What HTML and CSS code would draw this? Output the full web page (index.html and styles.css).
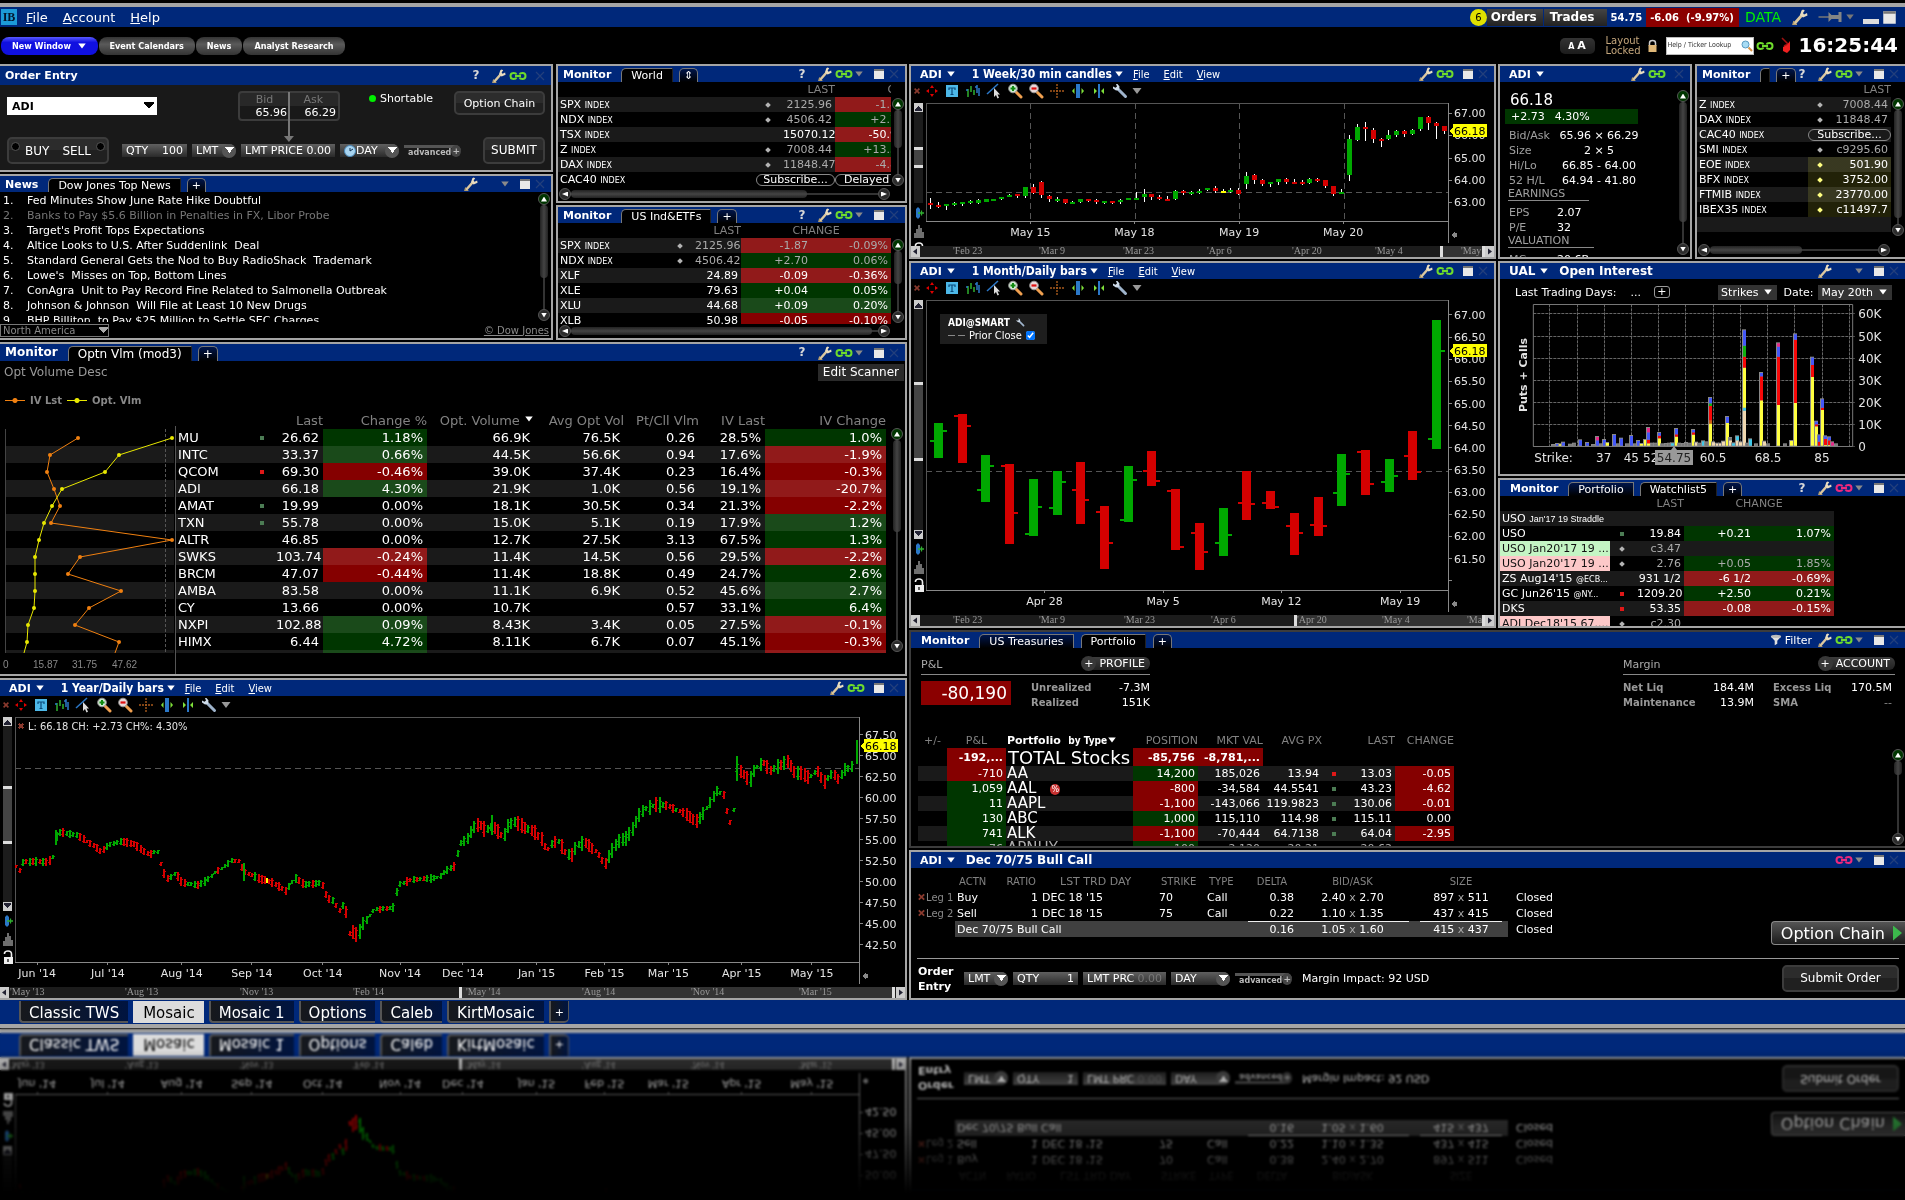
FILE: index.html
```
<!DOCTYPE html>
<html lang="en">

<head>
    <meta charset="UTF-8">
    <meta name="viewport" content="width=device-width, initial-scale=1.0">
    <title>Mosaic</title>
    <link rel="stylesheet" href="styles.css">
</head>

<body>
    <!-- Icon set -->
    <svg class="sprite" aria-hidden="true">
        <symbol id="i-wrench" viewBox="0 0 16 16">
            <path d="M3 14L10 6" stroke="#dcc8a0" stroke-width="2.8" stroke-linecap="round" />
            <path d="M9.500 1.500L8 6L11 8.500L15.500 6.500L15 4L12 5.500L11 4L12.800 1.500L11 .5Z" fill="#e8dcc0" />
            <path d="M2 12L1 15.500H5" stroke="#b8a070" stroke-width="1.500" fill="none" />
        </symbol>
        <symbol id="i-spanner" viewBox="0 0 16 16">
            <path d="M13.500 13.500L6 6" stroke="#9fb4cc" stroke-width="3" stroke-linecap="round" />
            <path d="M5.500 1L7.500 3.500L7 7L4 7.500L1 5.500L1 3.500L3.500 4.800L5 3.500L4 1Z" fill="#cfdcea" />
        </symbol>
        <symbol id="i-link" viewBox="0 0 18 10">
            <path d="M6 5H12" stroke="currentColor" stroke-width="2" />
            <path d="M7.500 3.500Q7 2 4.500 2Q1.500 2 1.500 5Q1.500 8 4.500 8Q7 8 7.500 6.500M10.500 3.500Q11 2 13.500 2Q16.500 2 16.500 5Q16.500 8 13.500 8Q11 8 10.500 6.500" fill="none" stroke="currentColor" stroke-width="2" />
        </symbol>
        <symbol id="i-win" viewBox="0 0 12 12">
            <rect x="1" y="1" width="10" height="10" fill="#e8e8e8" />
            <rect x="1" y="1" width="10" height="2" fill="#777" />
        </symbol>
        <symbol id="i-close" viewBox="0 0 12 12">
            <path d="M2 2L10 10M10 2L2 10" stroke="#233f7c" stroke-width="1.200" />
        </symbol>
        <symbol id="i-caret" viewBox="0 0 8 8">
            <path d="M1 2H7L4 6Z" fill="currentColor" />
        </symbol>
        <symbol id="i-filter" viewBox="0 0 14 14">
            <ellipse cx="7" cy="3" rx="6" ry="2" fill="#bbb" />
            <path d="M1 3L5.500 8V13L8.500 11.500V8L13 3Q7 6.500 1 3Z" fill="#e0e0e0" />
        </symbol>
        <symbol id="i-red-x" viewBox="0 0 10 10">
            <path d="M2 2L8 8M8 2L2 8" stroke="#8b3a2e" stroke-width="2" />
        </symbol>
        <symbol id="i-move" viewBox="0 0 16 16">
            <path d="M8 2L10 5H6ZM8 14L10 11H6ZM2 8L5 6V10ZM14 8L11 6V10Z" fill="#e00000" />
        </symbol>
        <symbol id="i-text" viewBox="0 0 16 16">
            <rect x="2" y="2" width="12" height="12" fill="#4db8e8" />
            <path d="M5 7V5H11V7M8 5V11.500M6.500 11.500H9.500" stroke="#0a4a7a" stroke-width="1.200" fill="none" />
        </symbol>
        <symbol id="i-bars" viewBox="0 0 16 16">
            <path d="M3 6V14M6 3V9M9 7V12" stroke="#2fb02f" stroke-width="1.500" />
            <path d="M1 7H3M10 4H12M12 2V10M14 5V13" stroke="#2b78c8" stroke-width="1.500" />
        </symbol>
        <symbol id="i-trend" viewBox="0 0 16 16">
            <path d="M1 11L12 1" stroke="#2b78c8" stroke-width="1.500" />
            <path d="M8 5V14L10 12L11.500 15.500L13 14.800L11.500 11.500H14Z" fill="#ddd" />
        </symbol>
        <symbol id="i-zoomin" viewBox="0 0 16 16">
            <path d="M9 9L14 14" stroke="#f0a050" stroke-width="3" stroke-linecap="round" />
            <circle cx="6" cy="5.500" r="4.300" fill="#d0e8d0" stroke="#999" />
            <path d="M3.500 5.500H8.500M6 3V8" stroke="#108a10" stroke-width="2" />
        </symbol>
        <symbol id="i-zoomout" viewBox="0 0 16 16">
            <path d="M9 9L14 14" stroke="#f0a050" stroke-width="3" stroke-linecap="round" />
            <circle cx="6" cy="5.500" r="4.300" fill="#e8d8d8" stroke="#999" />
            <path d="M3.500 5.500H8.500" stroke="#e01010" stroke-width="2.200" />
        </symbol>
        <symbol id="i-cross" viewBox="0 0 16 16">
            <path d="M8 1V15M1 8H15" stroke="#a85a1c" stroke-width="1.400" stroke-dasharray="2 1" />
        </symbol>
        <symbol id="i-expand" viewBox="0 0 16 16">
            <rect x="6" y="1" width="4" height="14" fill="#2b78c8" />
            <path d="M4.500 5V11L2 8ZM11.500 5V11L14 8Z" fill="#7fe03a" />
        </symbol>
        <symbol id="i-contract" viewBox="0 0 16 16">
            <rect x="7" y="1" width="2" height="14" fill="#2b78c8" />
            <path d="M3 5V11L6 8ZM13 5V11L10 8Z" fill="#7fe03a" />
        </symbol>
        <symbol id="i-fit" viewBox="0 0 10 14">
            <path d="M4 1L6 3V11L4 13L2 11V3Z" fill="#2b78c8" />
            <path d="M4 7H10M7.500 4.500V9.500" stroke="#2fb02f" stroke-width="1.300" />
        </symbol>
        <symbol id="i-volume" viewBox="0 0 10 14">
            <path d="M1 14V9M3 14V5M5 14V1M7 14V4M9 14V8" stroke="#ddd" />
        </symbol>
        <symbol id="i-unlock" viewBox="0 0 10 14">
            <path d="M1.500 4V3Q2 1 5 1Q8.500 1 8.500 4V8" fill="none" stroke="#eee" stroke-width="1.600" />
            <rect x="1" y="7" width="9" height="7" fill="#eee" />
            <path d="M5 9V12" stroke="#222" stroke-width="1.400" />
        </symbol>
        <symbol id="i-lock" viewBox="0 0 10 14">
            <path d="M2 7V4Q2 1.500 5 1.500Q8 1.500 8 4V7" fill="none" stroke="#ccc" stroke-width="1.500" />
            <rect x="1" y="6" width="8" height="7" fill="#e0b878" />
        </symbol>
        <symbol id="i-pin" viewBox="0 0 24 14">
            <path d="M0 7H11" stroke="#777" stroke-width="1.500" />
            <path d="M10 2V12L13 9H20V12H23V2H20V5H13Z" fill="#858585" />
        </symbol>
        <symbol id="i-search" viewBox="0 0 12 12">
            <path d="M7.500 7.500L11 11" stroke="#d89040" stroke-width="2" />
            <circle cx="4.500" cy="4.500" r="3.500" fill="#a8dcf4" stroke="#5a9ac0" />
        </symbol>
        <symbol id="i-phone" viewBox="0 0 10 18">
            <path d="M1 1L7 7L3 9" fill="none" stroke="#a01010" stroke-width="1.500" />
            <path d="M2 10L6 8L9 4V13L6 16L2 14Z" fill="#f02020" />
        </symbol>
        <symbol id="i-clock" viewBox="0 0 12 12">
            <circle cx="6" cy="6" r="5.500" fill="#a8d4f0" stroke="#4a88b8" />
            <path d="M6 3V6L9 4" stroke="#103050" fill="none" />
        </symbol>
    </svg>

    <div class="desk">
        <!-- Title bar -->
        <header class="titlebar">
            <span class="logo">IB</span>
            <nav class="menu">
                <a href="#"><u>F</u>ile</a>
                <a href="#"><u>A</u>ccount</a>
                <a href="#"><u>H</u>elp</a>
            </nav>
            <div class="title-right">
                <span class="badge">6</span>
                <button class="blotter">Orders</button>
                <button class="blotter trades">Trades</button>
                <b class="acct">54.75</b>
                <b class="acct acct-loss">-6.06&nbsp; (-9.97%)</b>
                <span class="data">DATA</span>
                <svg class="ic wr"><use href="#i-wrench" /></svg>
                <svg class="ic pin"><use href="#i-pin" /></svg>
                <svg class="ic caret"><use href="#i-caret" /></svg>
                <button class="minimize" aria-label="Minimize"></button>
                <svg class="ic"><use href="#i-win" /></svg>
            </div>
        </header>

        <!-- Toolbar -->
        <div class="toolbar">
            <button class="pill pill-new">New Window &nbsp;<svg class="ic caret"><use href="#i-caret" /></svg></button>
            <button class="pill">Event Calendars</button>
            <button class="pill">News</button>
            <button class="pill">Analyst Research</button>
            <div class="toolbar-right">
                <button class="font-size">A <span>A</span></button>
                <span class="layout">Layout<br>Locked</span>
                <svg class="ic lock"><use href="#i-lock" /></svg>
                <label class="search"><input type="text" placeholder="Help / Ticker Lookup" aria-label="Help or ticker lookup"><svg class="ic"><use href="#i-search" /></svg></label>
                <svg class="ic link"><use href="#i-link" /></svg>
                <svg class="ic phone"><use href="#i-phone" /></svg>
                <time class="clock">16:25:44</time>
            </div>
        </div>

        <main class="mosaic">
            <div class="col">
                <div class="left-top">
                    <div class="col">
                        <!-- Order entry -->
                        <section class="panel edge-left order">
                            <div class="head head-tall"><h2>Order Entry</h2><div class="icons" data-icons="help wrench link close"></div></div>
                            <form class="order-body">
                                <div class="order-row">
                                    <select class="ticker" aria-label="Ticker"><option>ADI</option></select>
                                    <div class="bidask">
                                        <span>Bid</span><span>Ask</span>
                                        <b>65.96</b><b>66.29</b>
                                    </div>
                                    <span class="shortable">Shortable</span>
                                    <button type="button" class="btn btn-chain">Option Chain</button>
                                </div>
                                <div class="order-row">
                                    <div class="btn side"><label><input type="radio" name="side">BUY</label><label>SELL<input type="radio" name="side"></label></div>
                                    <label class="field qty">QTY<input type="text" value="100"></label>
                                    <label class="field drop"><select aria-label="Order type"><option>LMT</option></select></label>
                                    <label class="field price">LMT PRICE<input type="text" value="0.00"></label>
                                    <label class="field drop day"><svg class="ic"><use href="#i-clock" /></svg><select aria-label="Time in force"><option>DAY</option></select></label>
                                    <button type="button" class="advanced">advanced<span>+</span></button>
                                    <button type="button" class="btn btn-submit">SUBMIT</button>
                                </div>
                            </form>
                        </section>

                        <!-- News -->
                        <section class="panel edge-left news">
                            <div class="head"><h2>News</h2><a href="#" class="tab on">Dow Jones Top News</a><a href="#" class="tab plus">+</a><div class="icons" data-icons="wrench gap caret win close"></div></div>
                            <div class="body">
                                <ol class="clip">
                                    <li><a href="#">Fed Minutes Show June Rate Hike Doubtful</a></li>
                                    <li class="read"><a href="#">Banks to Pay $5.6 Billion in Penalties in FX, Libor Probe</a></li>
                                    <li><a href="#">Target's Profit Tops Expectations</a></li>
                                    <li><a href="#">Altice Looks to U.S. After Suddenlink&nbsp; Deal</a></li>
                                    <li><a href="#">Standard General Gets the Nod to Buy RadioShack&nbsp; Trademark</a></li>
                                    <li><a href="#">Lowe's&nbsp; Misses on Top, Bottom Lines</a></li>
                                    <li><a href="#">ConAgra&nbsp; Unit to Pay Record Fine Related to Salmonella Outbreak</a></li>
                                    <li><a href="#">Johnson &amp; Johnson&nbsp; Will File at Least 10 New Drugs</a></li>
                                    <li><a href="#">BHP Billiton&nbsp; to Pay $25 Million to Settle SEC Charges</a></li>
                                </ol>
                                <div class="vscroll" data-thumb="70"></div>
                            </div>
                            <div class="news-foot"><select aria-label="Region"><option>North America</option></select><a href="#">© Dow Jones</a></div>
                        </section>
                    </div>

                    <div class="col">
                        <!-- World monitor -->
                        <section class="panel world">
                            <div class="head"><h2>Monitor</h2><a href="#" class="tab on">World</a><a href="#" class="tab plus">⇕</a><div class="icons" data-icons="help wrench link caret win close"></div></div>
                            <div class="body">
                                <div class="clip">
                                    <table class="quotes shade-odd">
                                        <colgroup><col><col class="w24"><col class="w55"><col class="w72"><col class="w80"></colgroup>
                                        <thead><tr><th></th><th></th><th>LAST</th><th colspan="2" class="mid">CHANGE</th></tr></thead>
                                        <tbody>
                                            <tr class="dim"><td>SPX <small>INDEX</small></td><td class="mk"><i class="dia"></i></td><td>2125.96</td><td class="dn">-1.87</td><td class="dn">-0.09%</td></tr>
                                            <tr class="dim"><td>NDX <small>INDEX</small></td><td class="mk"><i class="dia"></i></td><td>4506.42</td><td class="up">+2.70</td><td class="up">0.06%</td></tr>
                                            <tr><td>TSX <small>INDEX</small></td><td></td><td>15070.12</td><td class="dn">-50.94</td><td class="dn">-0.34%</td></tr>
                                            <tr class="dim"><td>Z <small>INDEX</small></td><td class="mk"><i class="dia"></i></td><td>7008.44</td><td class="up">+13.34</td><td class="up">0.19%</td></tr>
                                            <tr class="dim"><td>DAX <small>INDEX</small></td><td class="mk"><i class="dia"></i></td><td>11848.47</td><td class="dn">-4.89</td><td class="dn">-0.04%</td></tr>
                                            <tr><td>CAC40 <small>INDEX</small></td><td colspan="2" class="cap"><button class="capsule">Subscribe...</button></td><td colspan="2" class="cap"><button class="capsule delayed">Delayed</button></td></tr>
                                        </tbody>
                                    </table>
                                </div>
                                <div class="vscroll below-head" data-thumb="60"></div>
                            </div>
                            <div class="hscroll" data-thumb="77"></div>
                        </section>

                        <!-- US indices and ETFs -->
                        <section class="panel us">
                            <div class="head"><h2>Monitor</h2><a href="#" class="tab on">US Ind&amp;ETFs</a><a href="#" class="tab plus">+</a><div class="icons" data-icons="help wrench link caret win close"></div></div>
                            <div class="body">
                                <div class="clip">
                                    <table class="quotes shade-odd">
                                        <colgroup><col><col class="w24"><col class="w49"><col class="w70"><col class="w80"></colgroup>
                                        <thead><tr><th></th><th></th><th>LAST</th><th colspan="2" class="mid">CHANGE</th></tr></thead>
                                        <tbody>
                                            <tr class="dim"><td>SPX <small>INDEX</small></td><td class="mk"><i class="dia"></i></td><td>2125.96</td><td class="dn">-1.87</td><td class="dn">-0.09%</td></tr>
                                            <tr class="dim"><td>NDX <small>INDEX</small></td><td class="mk"><i class="dia"></i></td><td>4506.42</td><td class="up">+2.70</td><td class="up">0.06%</td></tr>
                                            <tr><td>XLF</td><td></td><td>24.89</td><td class="dn">-0.09</td><td class="dn">-0.36%</td></tr>
                                            <tr><td>XLE</td><td></td><td>79.63</td><td class="up">+0.04</td><td class="up">0.05%</td></tr>
                                            <tr><td>XLU</td><td></td><td>44.68</td><td class="up">+0.09</td><td class="up">0.20%</td></tr>
                                            <tr><td>XLB</td><td></td><td>50.98</td><td class="dn">-0.05</td><td class="dn">-0.10%</td></tr>
                                        </tbody>
                                    </table>
                                </div>
                                <div class="vscroll below-head" data-thumb="55"></div>
                            </div>
                            <div class="hscroll" data-thumb="98"></div>
                        </section>
                    </div>
                </div>

                <!-- Option volume scanner -->
                <section class="panel edge-left scanner">
                    <div class="head"><h2>Monitor</h2><a href="#" class="tab on">Optn Vlm (mod3)</a><a href="#" class="tab plus">+</a><div class="icons" data-icons="help wrench link caret win close"></div></div>
                    <div class="scan-top"><span>Opt Volume Desc</span><button>Edit Scanner</button></div>
                    <div class="legend"><i class="key iv"></i>IV Lst<i class="key vlm"></i>Opt. Vlm</div>
                    <div class="body">
                        <svg class="scan-plot" viewBox="0 0 176 262">
                            <path d="M6 34h168v17h-168zM6 68h168v17h-168zM6 102h168v17h-168zM6 136h168v17h-168zM6 170h168v17h-168zM6 204h168v17h-168zM6 238h168v3h-168z" fill="#1a1a1a" />
                            <path d="M5.500 17V241" stroke="#444" />
                            <path d="M165.500 17V241" stroke="#555" stroke-dasharray="3 2" />
                            <path d="M175.500 14V262" stroke="#555" />
                            <g class="iv" id="scan-iv"></g>
                            <g class="vlm" id="scan-vlm"></g>
                            <text x="3" y="256">0</text>
                            <text x="33" y="256">15.87</text>
                            <text x="72" y="256">31.75</text>
                            <text x="112" y="256">47.62</text>
                        </svg>
                        <div class="clip">
                            <table class="quotes big shade-even">
                                <colgroup><col><col class="w24"><col class="w50"><col class="w104"><col class="w107"><col class="w90"><col class="w75"><col class="w66"><col class="w121"></colgroup>
                                <thead><tr><th></th><th></th><th>Last</th><th>Change %</th><th>Opt. Volume <svg class="ic caret"><use href="#i-caret" /></svg></th><th>Avg Opt Vol</th><th>Pt/Cll Vlm</th><th>IV Last</th><th>IV Change</th></tr></thead>
                                <tbody>
                                    <tr><td>MU</td><td class="mk"><i class="sq"></i></td><td>26.62</td><td class="up">1.18%</td><td>66.9K</td><td>76.5K</td><td>0.26</td><td>28.5%</td><td class="up">1.0%</td></tr>
                                    <tr><td>INTC</td><td></td><td>33.37</td><td class="up">0.66%</td><td>44.5K</td><td>56.6K</td><td>0.94</td><td>17.6%</td><td class="dn">-1.9%</td></tr>
                                    <tr><td>QCOM</td><td class="mk"><i class="sq red"></i></td><td>69.30</td><td class="dn">-0.46%</td><td>39.0K</td><td>37.4K</td><td>0.23</td><td>16.4%</td><td class="dn">-0.3%</td></tr>
                                    <tr><td>ADI</td><td></td><td>66.18</td><td class="up">4.30%</td><td>21.9K</td><td>1.0K</td><td>0.56</td><td>19.1%</td><td class="dn">-20.7%</td></tr>
                                    <tr><td>AMAT</td><td class="mk"><i class="sq"></i></td><td>19.99</td><td>0.00%</td><td>18.1K</td><td>30.5K</td><td>0.34</td><td>21.3%</td><td class="dn">-2.2%</td></tr>
                                    <tr><td>TXN</td><td class="mk"><i class="sq"></i></td><td>55.78</td><td>0.00%</td><td>15.0K</td><td>5.1K</td><td>0.19</td><td>17.9%</td><td class="up">1.2%</td></tr>
                                    <tr><td>ALTR</td><td></td><td>46.85</td><td>0.00%</td><td>12.7K</td><td>27.5K</td><td>3.13</td><td>67.5%</td><td class="up">1.3%</td></tr>
                                    <tr><td>SWKS</td><td></td><td>103.74</td><td class="dn">-0.24%</td><td>11.4K</td><td>14.5K</td><td>0.56</td><td>29.5%</td><td class="dn">-2.2%</td></tr>
                                    <tr><td>BRCM</td><td></td><td>47.07</td><td class="dn">-0.44%</td><td>11.4K</td><td>18.8K</td><td>0.49</td><td>24.7%</td><td class="up">2.6%</td></tr>
                                    <tr><td>AMBA</td><td></td><td>83.58</td><td>0.00%</td><td>11.1K</td><td>6.9K</td><td>0.52</td><td>45.6%</td><td class="up">2.7%</td></tr>
                                    <tr><td>CY</td><td></td><td>13.66</td><td>0.00%</td><td>10.7K</td><td></td><td>0.57</td><td>33.1%</td><td class="up">6.4%</td></tr>
                                    <tr><td>NXPI</td><td></td><td>102.88</td><td class="up">0.09%</td><td>8.43K</td><td>3.4K</td><td>0.05</td><td>27.5%</td><td class="dn">-0.1%</td></tr>
                                    <tr><td>HIMX</td><td></td><td>6.44</td><td class="up">4.72%</td><td>8.11K</td><td>6.7K</td><td>0.07</td><td>45.1%</td><td class="dn">-0.3%</td></tr>
                                    <tr><td></td><td></td><td></td><td class="up"></td><td></td><td></td><td></td><td></td><td class="dn"></td></tr>
                                </tbody>
                            </table>
                        </div>
                        <div class="vscroll below-head" data-thumb="46"></div>
                    </div>
                </section>

                <!-- 1 year chart -->
                <section class="panel edge-left chart year">
                    <div class="head chart-head"><button class="sym">ADI<svg class="ic caret"><use href="#i-caret" /></svg></button><button class="span">1 Year/Daily bars<svg class="ic caret"><use href="#i-caret" /></svg></button><a href="#"><u>F</u>ile</a><a href="#"><u>E</u>dit</a><a href="#"><u>V</u>iew</a><div class="icons" data-icons="wrench link win close"></div></div>
                    <div class="chart-tools"></div>
                    <div class="chart-body"><div class="rail"></div><svg class="plot" id="chart-year"></svg></div>
                    <svg class="strip" id="strip-year"></svg>
                </section>
            </div>

            <div class="col">
                <div class="right-top">
                    <div class="col">
                        <!-- 1 week chart -->
                        <section class="panel chart week">
                            <div class="head chart-head"><button class="sym">ADI<svg class="ic caret"><use href="#i-caret" /></svg></button><button class="span">1 Week/30 min candles<svg class="ic caret"><use href="#i-caret" /></svg></button><a href="#"><u>F</u>ile</a><a href="#"><u>E</u>dit</a><a href="#"><u>V</u>iew</a><div class="icons" data-icons="wrench link win close"></div></div>
                            <div class="chart-tools"></div>
                            <div class="chart-body"><div class="rail"></div><svg class="plot" id="chart-week"></svg></div>
                            <svg class="strip" id="strip-week"></svg>
                        </section>

                        <!-- 1 month chart -->
                        <section class="panel chart month">
                            <div class="head chart-head"><button class="sym">ADI<svg class="ic caret"><use href="#i-caret" /></svg></button><button class="span">1 Month/Daily bars<svg class="ic caret"><use href="#i-caret" /></svg></button><a href="#"><u>F</u>ile</a><a href="#"><u>E</u>dit</a><a href="#"><u>V</u>iew</a><div class="icons" data-icons="wrench link win close"></div></div>
                            <div class="chart-tools"></div>
                            <div class="chart-body">
                                <div class="rail"></div><svg class="plot" id="chart-month"></svg>
                                <div class="study"><b>ADI@SMART <svg class="ic"><use href="#i-spanner" /></svg></b><label><i></i>Prior Close<input type="checkbox" checked></label></div>
                            </div>
                            <svg class="strip" id="strip-month"></svg>
                        </section>
                    </div>

                    <div class="col">
                        <div class="quote-row">
                            <!-- Quote details -->
                            <section class="panel quote">
                                <div class="head"><button class="sym">ADI<svg class="ic caret"><use href="#i-caret" /></svg></button><div class="icons" data-icons="wrench link close"></div></div>
                                <div class="body">
                                    <div class="clip details">
                                        <p class="price-now">66.18</p>
                                        <p class="change-now"><span>+2.73</span><span>4.30%</span></p>
                                        <dl>
                                            <dt>Bid/Ask</dt><dd>65.96 × 66.29</dd>
                                            <dt>Size</dt><dd>2 × 5</dd>
                                            <dt>Hi/Lo</dt><dd>66.85 - 64.00</dd>
                                            <dt>52 H/L</dt><dd>64.94 - 41.80</dd>
                                        </dl>
                                        <h3>EARNINGS</h3>
                                        <dl class="plain"><dt>EPS</dt><dd>2.07</dd><dt>P/E</dt><dd>32</dd></dl>
                                        <h3>VALUATION</h3>
                                        <dl class="plain"><dt>MC</dt><dd>20.6B</dd></dl>
                                    </div>
                                    <div class="vscroll" data-thumb="85"></div>
                                </div>
                            </section>

                            <!-- Index monitor -->
                            <section class="panel edge-right indexes">
                                <div class="head"><h2>Monitor</h2><a href="#" class="tab on sliver" aria-label="Indexes"></a><a href="#" class="tab plus">+</a><div class="icons" data-icons="help wrench link caret win close"></div></div>
                                <div class="body">
                                    <div class="clip">
                                        <table class="quotes shade-odd">
                                            <colgroup><col><col class="w24"><col class="w59"></colgroup>
                                            <thead><tr><th></th><th></th><th>LAST</th></tr></thead>
                                            <tbody>
                                                <tr class="dim"><td>Z <small>INDEX</small></td><td class="mk"><i class="dia"></i></td><td>7008.44</td></tr>
                                                <tr class="dim"><td>DAX <small>INDEX</small></td><td class="mk"><i class="dia"></i></td><td>11848.47</td></tr>
                                                <tr><td>CAC40 <small>INDEX</small></td><td colspan="2" class="cap"><button class="capsule">Subscribe...</button></td></tr>
                                                <tr class="dim"><td>SMI <small>INDEX</small></td><td class="mk"><i class="dia"></i></td><td>c9295.60</td></tr>
                                                <tr><td>EOE <small>INDEX</small></td><td class="mk late"><i class="dia"></i></td><td class="late">501.90</td></tr>
                                                <tr><td>BFX <small>INDEX</small></td><td class="mk late"><i class="dia"></i></td><td class="late">3752.00</td></tr>
                                                <tr><td>FTMIB <small>INDEX</small></td><td class="mk late"><i class="dia"></i></td><td class="late">23770.00</td></tr>
                                                <tr><td>IBEX35 <small>INDEX</small></td><td class="mk late"><i class="dia"></i></td><td class="late">c11497.7</td></tr>
                                                <tr><td></td><td></td><td></td></tr>
                                            </tbody>
                                        </table>
                                    </div>
                                    <div class="vscroll below-head" data-thumb="95"></div>
                                </div>
                                <div class="hscroll" data-thumb="55"></div>
                            </section>
                        </div>

                        <!-- Open interest -->
                        <section class="panel edge-right interest">
                            <div class="head"><button class="sym">UAL<svg class="ic caret"><use href="#i-caret" /></svg></button><h2>Open Interest</h2><div class="icons" data-icons="wrench gap caret win close"></div></div>
                            <div class="oi-tools">
                                <span>Last Trading Days:</span><span class="dots">...</span><button class="add">+</button>
                                <button class="menu-btn strikes">Strikes<svg class="ic caret"><use href="#i-caret" /></svg></button><span class="date">Date:</span><button class="menu-btn">May 20th<svg class="ic caret"><use href="#i-caret" /></svg></button>
                            </div>
                            <svg id="chart-oi"></svg>
                        </section>

                        <!-- Watchlist -->
                        <section class="panel edge-right watch">
                            <div class="head"><h2>Monitor</h2><a href="#" class="tab">Portfolio</a><a href="#" class="tab on">Watchlist5</a><a href="#" class="tab plus">+</a><div class="icons pink" data-icons="help wrench link caret win close"></div></div>
                            <div class="body">
                                <div class="clip">
                                    <table class="quotes shade-odd">
                                        <colgroup><col class="w110"><col class="w24"><col class="w50"><col class="w70"><col class="w80"></colgroup>
                                        <thead><tr><th></th><th></th><th>LAST</th><th colspan="2" class="mid">CHANGE</th></tr></thead>
                                        <tbody>
                                            <tr><td>USO <small class="long">Jan'17 19 Straddle</small></td><td></td><td></td><td></td><td></td></tr>
                                            <tr><td>USO</td><td class="mk"><i class="sq"></i></td><td>19.84</td><td class="up">+0.21</td><td class="up">1.07%</td></tr>
                                            <tr class="dim"><td class="call">USO Jan20'17 19 ...</td><td class="mk"><i class="dia"></i></td><td>c3.47</td><td></td><td></td></tr>
                                            <tr class="dim"><td class="put">USO Jan20'17 19 ...</td><td class="mk"><i class="dia"></i></td><td>2.76</td><td class="up">+0.05</td><td class="up">1.85%</td></tr>
                                            <tr><td>ZS Aug14'15 <small>@ECB...</small></td><td></td><td>931 1/2</td><td class="dn">-6 1/2</td><td class="dn">-0.69%</td></tr>
                                            <tr><td>GC Jun26'15 <small>@NY...</small></td><td class="mk"><i class="sq red"></i></td><td>1209.20</td><td class="up">+2.50</td><td class="up">0.21%</td></tr>
                                            <tr><td>DKS</td><td class="mk"><i class="sq red"></i></td><td>53.35</td><td class="dn">-0.08</td><td class="dn">-0.15%</td></tr>
                                            <tr class="dim"><td class="put">ADI Dec18'15 67....</td><td class="mk"><i class="dia"></i></td><td>c2.30</td><td></td><td></td></tr>
                                        </tbody>
                                    </table>
                                </div>
                            </div>
                        </section>
                    </div>
                </div>

                <!-- Portfolio -->
                <section class="panel edge-right portfolio">
                    <div class="head"><h2>Monitor</h2><a href="#" class="tab">US Treasuries</a><a href="#" class="tab on">Portfolio</a><a href="#" class="tab plus">+</a><div class="icons" data-icons="filter wrench link caret win close"></div></div>
                    <div class="summary">
                        <div class="pnl">
                            <div class="sum-head"><span>P&amp;L</span><button class="knobbed">PROFILE</button></div>
                            <div class="sum-body">
                                <span class="pnl-now">-80,190</span>
                                <dl><dt>Unrealized</dt><dd>-7.3M</dd><dt>Realized</dt><dd>151K</dd></dl>
                            </div>
                        </div>
                        <div class="margin">
                            <div class="sum-head"><span>Margin</span><button class="knobbed">ACCOUNT</button></div>
                            <div class="sum-body">
                                <dl><dt>Net Liq</dt><dd>184.4M</dd><dt>Maintenance</dt><dd>13.9M</dd></dl>
                                <dl><dt>Excess Liq</dt><dd>170.5M</dd><dt>SMA</dt><dd class="none">--</dd></dl>
                            </div>
                        </div>
                    </div>
                    <div class="body">
                        <div class="clip">
                            <table class="quotes positions">
                                <colgroup><col class="w29"><col class="w59"><col class="w127"><col class="w65"><col class="w65"><col class="w59"><col class="w24"><col class="w49"><col class="w59"></colgroup>
                                <thead><tr><th class="mid">+/-</th><th class="mid">P&amp;L</th><th class="by-type"><b>Portfolio</b> <button>by Type<svg class="ic caret"><use href="#i-caret" /></svg></button></th><th>POSITION</th><th>MKT VAL</th><th>AVG PX</th><th></th><th>LAST</th><th>CHANGE</th></tr></thead>
                                <tbody>
                                    <tr class="total"><td></td><td class="dn">-192,...</td><td>TOTAL Stocks</td><td class="dn">-85,756</td><td class="dn">-8,781,...</td><td></td><td></td><td></td><td></td></tr>
                                    <tr><td></td><td class="dn">-710</td><td>AA</td><td class="up">14,200</td><td>185,026</td><td>13.94</td><td class="mk"><i class="sq red"></i></td><td>13.03</td><td class="dn">-0.05</td></tr>
                                    <tr><td></td><td class="up">1,059</td><td>AAL<i class="alert">%</i></td><td class="dn">-800</td><td>-34,584</td><td>44.5541</td><td class="mk"><i class="sq"></i></td><td>43.23</td><td class="dn">-4.62</td></tr>
                                    <tr><td></td><td class="up">11</td><td>AAPL</td><td class="dn">-1,100</td><td>-143,066</td><td>119.9823</td><td class="mk"><i class="sq"></i></td><td>130.06</td><td class="dn">-0.01</td></tr>
                                    <tr><td></td><td class="up">130</td><td>ABC</td><td class="up">1,000</td><td>115,110</td><td>114.98</td><td class="mk"><i class="sq"></i></td><td>115.11</td><td>0.00</td></tr>
                                    <tr><td></td><td class="up">741</td><td>ALK</td><td class="dn">-1,100</td><td>-70,444</td><td>64.7138</td><td class="mk"><i class="sq"></i></td><td>64.04</td><td class="dn">-2.95</td></tr>
                                    <tr class="dim"><td></td><td class="up">76</td><td>APNHY</td><td class="up">100</td><td>2,120</td><td>20.21</td><td class="mk"><i class="dia"></i></td><td>c20.62</td><td></td></tr>
                                </tbody>
                            </table>
                        </div>
                        <div class="vscroll below-head" data-thumb="19"></div>
                    </div>
                </section>

                <!-- Spread -->
                <section class="panel edge-right spread">
                    <div class="head"><button class="sym">ADI<svg class="ic caret"><use href="#i-caret" /></svg></button><h2>Dec 70/75 Bull Call</h2><div class="icons pink" data-icons="link caret win close"></div></div>
                    <div class="legs">
                        <table>
                            <thead><tr><th></th><th>ACTN</th><th class="r">RATIO</th><th class="day">LST TRD DAY</th><th>STRIKE</th><th>TYPE</th><th class="c">DELTA</th><th class="c">BID/ASK</th><th></th><th class="c">SIZE</th><th></th><th></th></tr></thead>
                            <tbody>
                                <tr><td class="leg"><svg class="ic"><use href="#i-red-x" /></svg>Leg 1</td><td>Buy</td><td class="r">1</td><td>DEC 18 '15</td><td>70</td><td>Call</td><td class="r">0.38</td><td class="c">2.40 <i>x</i> 2.70</td><td></td><td class="c">897 <i>x</i> 511</td><td></td><td>Closed</td></tr>
                                <tr><td class="leg"><svg class="ic"><use href="#i-red-x" /></svg>Leg 2</td><td>Sell</td><td class="r">1</td><td>DEC 18 '15</td><td>75</td><td>Call</td><td class="r">0.22</td><td class="c">1.10 <i>x</i> 1.35</td><td></td><td class="c">437 <i>x</i> 415</td><td></td><td>Closed</td></tr>
                                <tr class="net"><td></td><td colspan="5">Dec 70/75 Bull Call</td><td class="r sum">0.16</td><td class="c sum">1.05 <i>x</i> 1.60</td><td></td><td class="c sum">415 <i>x</i> 437</td><td></td><td>Closed</td></tr>
                            </tbody>
                        </table>
                        <button class="chain-btn">Option Chain<i></i></button>
                    </div>
                    <form class="spread-order">
                        <b>Order Entry</b>
                        <label class="field drop"><select aria-label="Order type"><option>LMT</option></select></label>
                        <label class="field qty">QTY<input type="text" value="1"></label>
                        <label class="field prc">LMT PRC<input type="text" value="0.00"></label>
                        <label class="field drop day"><select aria-label="Time in force"><option>DAY</option></select></label>
                        <button type="button" class="advanced">advanced<span>+</span></button>
                        <span class="impact">Margin Impact: 92 USD</span>
                        <button type="button" class="btn">Submit Order</button>
                    </form>
                </section>
            </div>
        </main>

        <!-- Workspace tabs -->
        <nav class="worktabs">
            <a href="#">Classic TWS</a>
            <a href="#" class="on">Mosaic</a>
            <a href="#">Mosaic 1</a>
            <a href="#">Options</a>
            <a href="#">Caleb</a>
            <a href="#">KirtMosaic</a>
            <a href="#" class="add-tab">+</a>
        </nav>
    </div>
    <div class="floor"></div>

    <script src="charts.js"></script>
</body>

</html>
```
FILE: styles.css
```
* {
    box-sizing: border-box;
}

body {
    margin: 0;
    background: #000;
    color: #fff;
    font: 11px/15px "DejaVu Sans", Verdana, sans-serif;
    overflow: hidden;
}

h2, h3, p, dl, dd, ol {
    margin: 0;
    padding: 0;
}

a {
    color: inherit;
    text-decoration: none;
}

i {
    font-style: normal;
}

button, input, select {
    margin: 0;
    padding: 0;
    border: 0;
    background: none;
    color: inherit;
    font: inherit;
}

select {
    appearance: none;
}

.sprite {
    display: none;
}

.ic {
    width: 12px;
    height: 12px;
    flex: none;
}

.ic.caret {
    width: 10px;
    height: 10px;
}

/* Mirror image of the desk on the floor */
.desk {
    -webkit-box-reflect: below 1px linear-gradient(transparent 84%, rgba(0, 0, 0, 0.6) 91%, rgba(0, 0, 0, 0.7) 96%, #000 98%);
}

.floor {
    position: relative;
    height: 172px;
    backdrop-filter: blur(1px);
}

/* Title bar */
.titlebar {
    display: flex;
    align-items: center;
    height: 24px;
    margin-top: 3px;
    border-top: 4px solid #a5a5a5;
    background: #00287a;
    font-size: 13px;
}

.logo {
    width: 16px;
    height: 16px;
    margin-left: 1px;
    background: #1c9ad8;
    color: #03142c;
    font: bold 12px/16px "Liberation Serif", serif;
    text-align: center;
}

.menu {
    display: flex;
    gap: 15px;
    margin-left: 9px;
}

.title-right {
    display: flex;
    align-items: center;
    margin-left: auto;
    padding-right: 8px;
}

.badge {
    width: 17px;
    height: 17px;
    border-radius: 50%;
    background: #e0e000;
    color: #000;
    font-size: 10px;
    line-height: 17px;
    text-align: center;
}

.blotter {
    height: 17px;
    padding: 0 6px 0 4px;
    background: linear-gradient(#444, #222);
    font-weight: bold;
    font-size: 12px;
}

.blotter.trades {
    margin-left: 1px;
    padding: 0 12px 0 6px;
}

.acct {
    margin: 0 4px;
    font-size: 10px;
}

.acct-loss {
    height: 19px;
    margin: 0 6px 0 0;
    padding: 0 5px 0 4px;
    background: #8b0000;
    line-height: 19px;
}

.data {
    color: #00f000;
    font-size: 14px;
}

.titlebar .wr {
    width: 16px;
    height: 16px;
    margin: 0 10px 0 11px;
}

.titlebar .pin {
    width: 25px;
    height: 14px;
}

.titlebar .caret {
    margin: 0 8px 0 2px;
    color: #777;
}

.minimize {
    width: 16px;
    height: 5px;
    margin: 8px 3px 0 0;
    background: #ddd;
}

.titlebar .ic:last-child {
    width: 15px;
    height: 15px;
}

/* Toolbar */
.toolbar {
    display: flex;
    align-items: center;
    gap: 1px;
    height: 37px;
    padding: 0 7px 0 1px;
}

.pill {
    display: flex;
    align-items: center;
    height: 18px;
    padding: 0 11px;
    border-radius: 8px;
    background: linear-gradient(#333, #5a5a5a 40%, #333);
    font: bold 9px/18px "DejaVu Sans Condensed", "DejaVu Sans", sans-serif;
}

.pill-new {
    background: linear-gradient(#5a5aff, #1010e0 30%);
}

.toolbar-right {
    display: flex;
    align-items: center;
    margin-left: auto;
}

.font-size {
    width: 35px;
    height: 16px;
    margin-right: 11px;
    border-radius: 5px;
    background: linear-gradient(#333, #1c1c1c);
    font-weight: bold;
    font-size: 8px;
}

.font-size span {
    font-size: 11px;
}

.layout {
    color: #c4a67c;
    font-size: 10px;
    line-height: 10px;
}

.toolbar .lock {
    width: 11px;
    height: 14px;
    margin: 0 8px 0 6px;
}

.search {
    display: flex;
    align-items: center;
    width: 88px;
    height: 18px;
    margin-right: 2px;
    border: 1px solid #bbb;
    background: #fff;
}

.search input {
    width: 74px;
    padding-left: 1px;
    color: #333;
    font-family: "DejaVu Sans Condensed", "DejaVu Sans", sans-serif;
    font-size: 7px;
}

.search input::placeholder {
    color: #333;
}

.link {
    width: 18px;
    height: 10px;
    color: #6fdc2c;
}

.phone {
    width: 10px;
    height: 18px;
    margin: 0 8px 0 7px;
}

.clock {
    font-weight: bold;
    font-size: 20px;
}

/* Mosaic layout */
.mosaic {
    display: grid;
    grid-template-columns: 907fr 996fr;
    gap: 2px;
}

.col {
    display: flex;
    flex-direction: column;
    gap: 2px;
    min-width: 0;
}

.left-top {
    display: grid;
    grid-template-columns: 553fr 351fr;
    gap: 3px;
}

.right-top {
    display: grid;
    grid-template-columns: 587fr 407fr;
    gap: 2px;
}

.quote-row {
    display: grid;
    grid-template-columns: 194fr 210fr;
    gap: 3px;
}

.panel {
    display: flex;
    flex-direction: column;
    min-width: 0;
    border: 2px solid #a5a5a5;
    background: #000;
}

.edge-left {
    border-left: 0;
}

.edge-right {
    border-right: 0;
}

.order { height: 108px; }
.news { height: 166px; }
.world { height: 139px; }
.us { height: 135px; }
.scanner { height: 334px; }
.year { height: 322px; }
.week { height: 195px; }
.month { height: 367px; }
.quote, .indexes { height: 195px; }
.interest { height: 215px; }
.watch { height: 150px; }
.portfolio { height: 218px; }
.spread { height: 150px; }

.portfolio {
    border-color: #3c3c3c;
}

/* Panel header */
.head {
    display: flex;
    flex: none;
    align-items: center;
    height: 16px;
    background: #00287a;
}

.head-tall {
    height: 19px;
}

.head h2 {
    padding-left: 5px;
    font-size: 11px;
}

.head .sym {
    display: flex;
    align-items: center;
    gap: 4px;
    padding-left: 9px;
    font-weight: bold;
}

.interest .head .sym,
.interest .head h2,
.scanner .head h2,
.spread .head h2 {
    font-size: 12px;
}

.interest .head h2,
.spread .head h2 {
    padding-left: 10px;
}

.watch .head h2,
.portfolio .head h2 {
    padding-left: 10px;
}

.tab {
    align-self: flex-end;
    height: 14px;
    margin-left: 10px;
    padding: 0 9px;
    border: 1px solid #777;
    border-width: 1px 1px 0;
    border-radius: 5px 0 0 0;
    background: linear-gradient(#00154a, #000);
    line-height: 14px;
}

.tab + .tab {
    margin-left: 6px;
}

.tab.on {
    border-right-color: #222;
    background: #000;
}

.tab.plus {
    padding: 0 4px;
    border-radius: 5px 5px 0 0;
}

.portfolio .tab + .tab {
    margin-left: 7px;
}

.tab.sliver {
    width: 10px;
    padding: 0;
}

.icons {
    display: flex;
    align-items: center;
    margin-left: auto;
    padding-right: 2px;
}

.icons button {
    display: flex;
    align-items: center;
    justify-content: center;
    height: 14px;
}

.b-close { width: 18px; }
.b-win { width: 12px; margin-left: 8px; }
.b-caret { width: 12px; color: #8a8a8a; }
.b-link { width: 18px; }
.b-wrench { width: 16px; margin-right: 2px; }
.b-help { width: 12px; margin-right: 9px; color: #d8d8d8; font-size: 12px; font-weight: bold; }
.b-gap { width: 18px; }
.b-filter { gap: 3px; margin-right: 5px; }

.b-link:has(+ .b-close) {
    margin-right: 4px;
}

.b-wrench .ic {
    width: 14px;
    height: 14px;
}

.pink .link {
    color: #f0287c;
}

/* Scroll bars */
.vscroll {
    display: flex;
    flex: none;
    flex-direction: column;
    align-items: center;
    width: 14px;
    padding: 1px 0;
}

.below-head {
    margin-top: 15px;
}

.hscroll {
    display: flex;
    flex: none;
    align-items: center;
    height: 14px;
    margin-right: 14px;
    padding: 0 1px;
}

.knob {
    flex: none;
    width: 12px;
    height: 12px;
    border: 1px solid #555 !important;
    border-radius: 50%;
    background: #2c2c2c;
}

.knob::before {
    content: "";
    display: block;
    margin: 0 auto;
    width: 6px;
    height: 5px;
    background: #fff;
    clip-path: polygon(50% 0, 100% 100%, 0 100%);
}

.knob.down::before { clip-path: polygon(0 0, 100% 0, 50% 100%); }
.knob.left::before { clip-path: polygon(0 50%, 100% 0, 100% 100%); }
.knob.right::before { clip-path: polygon(0 0, 100% 50%, 0 100%); }

.track {
    flex: 1;
    align-self: stretch;
    background: linear-gradient(#333, #333) center / 2px 100% no-repeat;
}

.hscroll .track {
    align-self: center;
    background-size: 100% 2px;
}

.thumb {
    display: block;
    width: 8px;
    margin: 0 auto;
    border-radius: 4px;
    background: linear-gradient(90deg, #222, #444, #222);
}

.hscroll .thumb {
    height: 8px;
    margin: 0;
    background: linear-gradient(#222, #444, #222);
}

.body {
    display: flex;
    flex: 1;
    min-height: 0;
}

.clip {
    flex: 1;
    min-width: 0;
    overflow: hidden;
}

/* Quote tables */
.quotes {
    width: 100%;
    border-collapse: collapse;
    table-layout: fixed;
}

.world .quotes {
    width: calc(100% + 96px);
}

.watch .quotes {
    width: 334px;
}

.quotes th,
.quotes td {
    height: 15px;
    padding: 0 3px;
    line-height: 15px;
    text-align: right;
    white-space: nowrap;
}

.quotes th {
    padding: 0;
    color: #828282;
    font-weight: normal;
}

.quotes th.mid {
    text-align: center;
}

.quotes td:first-child {
    padding: 0 0 0 2px;
    text-align: left;
}

.quotes small {
    font-size: 8px;
    line-height: 0;
}

.quotes small.long {
    font-family: "Liberation Sans", Arial, sans-serif;
    font-size: 9px;
}

.dim td + td {
    color: #ababab;
}

.up { background-color: #003600; }
.dn { background-color: #850000; }
.late { background-color: #222208; }

.call,
.put {
    background-color: #c4f5c4;
    color: #111;
}

.put {
    background-color: #fcc8c8;
}

.shade-odd tbody tr:nth-child(odd) td:not(.call, .put),
.shade-even tbody tr:nth-child(even) td {
    background-image: linear-gradient(rgba(255, 255, 255, 0.1), rgba(255, 255, 255, 0.1));
}

.quotes .mk {
    padding: 0;
}

.dia,
.sq {
    display: block;
    width: 4px;
    height: 4px;
    margin: 0 auto;
    background: #b4b4b4;
}

.dia { transform: rotate(45deg); }
.sq { background: #4c7c54; }
.sq.red { background: #e01818; }
.late .dia { background: #ffff80; }

.big .sq {
    margin-right: 5px;
}

.quotes .cap {
    padding: 0;
}

.capsule {
    display: block;
    width: 100%;
    height: 12px;
    border: 1px solid #888;
    border-radius: 6px;
    line-height: 10px;
}

.capsule.delayed {
    padding-left: 8px;
    text-align: left;
}

.w24 { width: 24px; }
.w29 { width: 29px; }
.w49 { width: 49px; }
.w50 { width: 50px; }
.w55 { width: 55px; }
.w59 { width: 59px; }
.w65 { width: 65px; }
.w66 { width: 66px; }
.w70 { width: 70px; }
.w72 { width: 72px; }
.w75 { width: 75px; }
.w80 { width: 80px; }
.w90 { width: 90px; }
.w104 { width: 104px; }
.w107 { width: 107px; }
.w110 { width: 110px; }
.w121 { width: 121px; }
.w127 { width: 127px; }

/* Buttons and order fields */
.btn {
    height: 27px;
    border: 2px solid #3c3c3c;
    border-radius: 5px;
    background: linear-gradient(#2c2c2c 50%, #202020 50%);
    font-size: 12px;
}

.field {
    display: flex;
    align-items: center;
    height: 13px;
    padding: 0 4px;
    background: linear-gradient(#606060, #2a2a2a);
    line-height: 13px;
    white-space: nowrap;
}

.field input {
    flex: 1;
    min-width: 0;
    width: 0;
    height: 13px;
    text-align: right;
}

.field select {
    flex: 1;
    min-width: 0;
    height: 13px;
}

.qty { width: 65px; }
.price { width: 94px; }
.prc { width: 83px; }

.prc input {
    color: #777;
}

.drop {
    width: 44px;
    padding-right: 0;
    border-radius: 0 7px 7px 0;
}

.drop.day {
    width: 59px;
}

.drop::after {
    content: "";
    width: 14px;
    height: 14px;
    border-radius: 50%;
    background: #555 conic-gradient(from -35deg at 50% 90%, #fff 70deg, transparent 0) center / 9px 7px no-repeat;
}

.advanced {
    display: flex;
    align-items: center;
    justify-content: space-between;
    width: 57px;
    height: 12px;
    padding-left: 4px;
    border-top: 3px solid #555;
    border-radius: 0 6px 6px 0;
    color: #bbb;
    font: bold 8px/9px "DejaVu Sans", sans-serif;
}

.advanced span {
    width: 12px;
    height: 12px;
    margin-top: -3px;
    border-radius: 50%;
    background: #444;
    font-size: 9px;
    line-height: 12px;
}

.order-body {
    flex: 1;
    padding: 6px 6px 6px 7px;
    background: #191919;
}

.order-row {
    display: flex;
    align-items: center;
    gap: 5px;
    height: 30px;
}

.order-row + .order-row {
    height: 27px;
    margin-top: 16px;
}

.ticker {
    width: 150px;
    height: 18px;
    margin-right: auto;
    padding-left: 5px;
    background: #fff conic-gradient(from -45deg at 50% 80%, #000 90deg, transparent 0) right 3px center / 10px 8px no-repeat;
    color: #000;
    font-weight: bold;
}

.bidask {
    position: relative;
    display: grid;
    grid-template-columns: 1fr 1fr;
    width: 102px;
    height: 30px;
    margin-right: 24px;
    border: 2px solid #3c3c3c;
    border-radius: 4px;
    background: linear-gradient(#282828 50%, #191919 50%);
    color: #777;
    line-height: 13px;
    text-align: center;
}

.bidask b {
    padding-right: 2px;
    color: #fff;
    font-weight: normal;
    text-align: right;
}

.bidask::before {
    content: "";
    position: absolute;
    left: 48px;
    top: -1px;
    width: 2px;
    height: 45px;
    background: #777;
}

.bidask::after {
    content: "";
    position: absolute;
    left: 44px;
    top: 43px;
    width: 10px;
    height: 6px;
    background: #777;
    clip-path: polygon(0 0, 100% 0, 50% 100%);
}

.shortable {
    align-self: flex-start;
    margin-right: 16px;
}

.shortable::before {
    content: "";
    display: inline-block;
    width: 7px;
    height: 7px;
    margin-right: 4px;
    border-radius: 50%;
    background: #00f000;
}

.btn-chain {
    align-self: flex-start;
    width: 91px;
    height: 24px;
    font-size: 11px;
}

.side {
    display: flex;
    justify-content: space-between;
    width: 102px;
    margin-right: 8px;
    padding: 0 2px;
    line-height: 25px;
}

.side label {
    display: flex;
    gap: 5px;
}

.side input {
    appearance: none;
    width: 9px;
    height: 9px;
    margin-top: 3px;
    border: 1px solid #555;
    border-radius: 50%;
    background: #000;
}

.btn-submit {
    width: 62px;
    margin-left: auto;
}

/* News */
.news ol {
    list-style: none;
    counter-reset: item;
    padding-top: 1px;
}

.news li {
    display: flex;
    height: 15px;
    padding-left: 3px;
    white-space: nowrap;
    counter-increment: item;
}

.news li::before {
    content: counter(item) ".";
    width: 24px;
}

.news .read {
    color: #777;
}

.news-foot {
    display: flex;
    justify-content: space-between;
    align-items: center;
    height: 16px;
    padding-right: 2px;
    color: #8a8a8a;
    font-size: 10px;
}

.news-foot select {
    width: 109px;
    height: 13px;
    padding-left: 2px;
    border: 1px solid #777;
    background: conic-gradient(from -45deg at 50% 80%, #aaa 90deg, transparent 0) right 0 center / 9px 7px no-repeat;
    line-height: 11px;
}

.news-foot a {
    text-decoration: underline;
}

/* Scanner */
.scanner .head {
    height: 17px;
}

.scanner .tab {
    height: 15px;
    font-size: 12px;
}

.scan-top {
    display: flex;
    justify-content: space-between;
    align-items: center;
    height: 22px;
    padding: 0 1px 0 4px;
    color: #999;
    font-size: 12px;
}

.scan-top button {
    height: 17px;
    padding: 0 5px;
    background: #2a2a2a;
    color: #fff;
}

.legend {
    display: flex;
    align-items: center;
    height: 29px;
    padding: 6px 0 0 5px;
    color: #888;
    font-weight: bold;
    font-size: 10px;
}

.key {
    width: 20px;
    height: 5px;
    margin-right: 5px;
    background: radial-gradient(circle, currentColor 2px, transparent 3px), linear-gradient(transparent 2px, currentColor 2px, currentColor 3px, transparent 3px);
}

.key.vlm {
    margin-left: 5px;
}

.iv { color: #f08010; }
.vlm { color: #e8e800; }

.scan-plot {
    flex: none;
    width: 176px;
    height: 262px;
    fill: #888;
    font: 10px "Liberation Sans", Arial, sans-serif;
}

.big {
    font-size: 13px;
}

.big th,
.big td {
    height: 17px;
    line-height: 17px;
}

.quotes.big td {
    padding-right: 4px;
}

.scanner .clip {
    max-height: 241px;
}

.big .caret {
    color: #fff;
    vertical-align: 1px;
}

.scanner .vscroll {
    width: 14px;
    height: 226px;
    margin-right: 1px;
    margin-left: 4px;
}

/* Charts */
.chart-head {
    font-family: "DejaVu Sans Condensed", "DejaVu Sans", sans-serif;
}

.chart-head .sym {
    font-family: "DejaVu Sans", sans-serif;
}

.chart-head .span {
    display: flex;
    align-items: center;
    gap: 2px;
    margin: 0 9px 0 16px;
    font-weight: bold;
    font-size: 12px;
}

.chart-head a {
    margin-right: 14px;
}

.chart-tools {
    display: flex;
    flex: none;
    align-items: center;
    height: 21px;
    padding: 0 0 3px 1px;
}

.chart-tools button {
    display: flex;
    justify-content: center;
    width: 21px;
}

.chart-tools .ic {
    width: 16px;
    height: 16px;
}

.chart-tools .t-red-x { width: 10px; }
.chart-tools .t-red-x .ic { width: 8px; }
.chart-tools .t-move { width: 19px; }
.chart-tools .t-caret { width: 14px; color: #999; }
.chart-tools .t-caret .ic { width: 12px; }

.chart-body {
    position: relative;
    display: flex;
    flex: 1;
    min-height: 0;
}

.plot {
    flex: 1;
    min-width: 0;
}

.rail {
    display: flex;
    flex-direction: column;
    align-items: center;
    width: 15px;
    overflow: hidden;
}

.rail-track {
    flex: 1;
    width: 9px;
    padding: 35px 0;
    background: #1c1c1c;
}

.rail-track i {
    display: block;
    height: 100%;
    border: solid #ddd;
    border-width: 3px 0;
    background: #444;
}

.month .rail-track {
    padding: 73px 0 69px;
}

.year .rail-track {
    padding: 60px 0 58px;
}

.rail-end {
    width: 9px;
    height: 9px;
    background: #ccc conic-gradient(from 135deg at 50% 20%, #223 90deg, transparent 0) center / 7px 6px no-repeat;
}

.rail-end.bottom {
    transform: rotate(180deg);
}

.week .rail-end.bottom {
    display: none;
}

.rail-icons {
    display: flex;
    flex: none;
    flex-direction: column;
    gap: 4px;
    height: 76px;
    padding-top: 3px;
}

.week .rail-icons {
    height: 43px;
}

.rail-icons .ic {
    width: 10px;
    height: 14px;
}

.strip {
    flex: none;
    width: 100%;
    height: 11px;
    font: 10px "Liberation Serif", serif;
}

.plot text,
#chart-oi text {
    fill: #e4e4e4;
}

.study {
    position: absolute;
    left: 29px;
    top: 14px;
    width: 107px;
    height: 30px;
    padding-left: 8px;
    background: #1e1e1e;
    font: 10px/13px "DejaVu Sans Condensed", "DejaVu Sans", sans-serif;
}

.study b {
    display: flex;
    align-items: center;
    gap: 6px;
    padding-top: 2px;
}

.study .ic {
    width: 9px;
    height: 9px;
}

.study label {
    display: flex;
    align-items: center;
    gap: 4px;
    font-size: 11px;
}

.study label i {
    width: 17px;
    height: 1px;
    background: linear-gradient(90deg, #888 7px, transparent 7px, transparent 10px, #888 10px);
}

.study input {
    width: 9px;
    height: 9px;
}

/* Quote details */
.details {
    padding: 9px 0 0 5px;
}

.price-now {
    height: 18px;
    padding-left: 5px;
    font-size: 15px;
    line-height: 18px;
}

.change-now {
    display: flex;
    gap: 10px;
    width: 133px;
    padding-left: 6px;
    background: #003600;
}

.details dl {
    display: grid;
    grid-template-columns: 48px 84px;
    padding: 4px 0 0 4px;
}

.details dt,
.details h3 {
    color: #a0a0a0;
    font-weight: normal;
    font-size: 11px;
}

.details dd {
    text-align: center;
}

.details h3 {
    display: table;
    height: 13px;
    margin-left: 3px;
    padding-right: 24px;
    border-bottom: 1px solid #888;
    line-height: 11px;
}

.details .plain dd {
    text-align: left;
}

.quote .vscroll {
    margin: 7px 0 1px;
}

.indexes .vscroll {
    margin-bottom: 6px;
}

/* Open interest */
.oi-tools {
    display: flex;
    align-items: center;
    height: 24px;
    padding: 2px 13px 0 15px;
}

.dots {
    margin: 0 13px 0 14px;
}

.add {
    width: 16px;
    height: 12px;
    border: 1px solid #999;
    border-radius: 3px;
    line-height: 10px;
}

.menu-btn {
    display: flex;
    align-items: center;
    gap: 5px;
    height: 15px;
    padding: 0 4px 0 3px;
    background: #333;
}

.strikes {
    margin-left: auto;
}

.date {
    margin: 0 5px 0 6px;
}

#chart-oi {
    width: 100%;
    height: 171px;
    font-size: 12px;
}

/* Portfolio */
.summary {
    display: flex;
    justify-content: space-between;
    padding: 8px 10px 0;
}

.pnl {
    width: 229px;
}

.margin {
    width: 272px;
}

.sum-head {
    display: flex;
    justify-content: space-between;
    height: 19px;
    border-bottom: 1px solid #888;
    color: #aaa;
    line-height: 18px;
}

.knobbed {
    height: 13px;
    margin-top: 1px;
    padding-right: 5px;
    border-radius: 0 6px 6px 0;
    background: linear-gradient(#3c3c3c, #222);
    color: #fff;
    line-height: 13px;
}

.knobbed::before {
    content: "+";
    display: inline-block;
    width: 15px;
    height: 15px;
    margin: -1px 3px 0 -6px;
    border-radius: 50%;
    background: #383838;
    vertical-align: top;
    line-height: 15px;
}

.sum-body {
    display: flex;
    justify-content: space-between;
    padding-top: 5px;
}

.pnl-now {
    width: 90px;
    height: 24px;
    margin-top: 1px;
    padding-right: 4px;
    background: #8b0000;
    font-size: 17px;
    line-height: 24px;
    text-align: right;
}

.sum-body dl {
    display: grid;
    grid-template-columns: auto auto;
    width: 119px;
}

.margin dl:first-child {
    width: 131px;
}

.sum-body dt {
    color: #999;
    font-weight: bold;
    font-size: 10px;
}

.sum-body dd {
    text-align: right;
    white-space: nowrap;
}

.margin .sum-body {
    padding-right: 3px;
}

.sum-body .none {
    color: #888;
}

.portfolio .body {
    margin-top: 23px;
    padding-left: 7px;
}

.quotes.positions {
    width: 536px;
}

.positions tbody tr:nth-child(even) {
    background: #1a1a1a;
}

.positions th.by-type {
    padding-left: 1px;
    color: #fff;
    text-align: left;
}

.by-type button {
    margin-left: 4px;
    font: bold 10px "DejaVu Sans Condensed", sans-serif;
}

.by-type .caret {
    vertical-align: -1px;
}

.positions td:nth-child(3) {
    padding-left: 1px;
    font-size: 15px;
    text-align: left;
}

.positions .total td {
    height: 18px;
    font-weight: bold;
}

.positions .total td:nth-child(3) {
    padding-left: 2px;
    font-weight: normal;
    font-size: 18px;
}

.alert {
    display: inline-block;
    width: 10px;
    height: 11px;
    margin-left: 14px;
    border-radius: 5px;
    background: #c83030;
    font-size: 8px;
    line-height: 11px;
    text-align: center;
    vertical-align: 1px;
}

/* Spread */
.legs {
    position: relative;
    height: 91px;
    margin: 0 6px;
    border-bottom: 1px solid #999;
}

.legs table {
    width: 640px;
    margin-top: 5px;
    border-collapse: collapse;
    table-layout: fixed;
}

.legs th,
.legs td {
    height: 16px;
    padding: 0 2px;
    line-height: 15px;
    text-align: left;
    white-space: nowrap;
}

.legs th {
    padding: 0 4px;
    color: #828282;
    font-weight: normal;
    font-size: 10px;
}

.legs th:nth-child(1) { width: 38px; }
.legs th:nth-child(2) { width: 42px; }
.legs th:nth-child(3) { width: 43px; padding: 0 4px 0 0; }
.legs th:nth-child(4) { width: 117px; padding-left: 20px; }
.legs th:nth-child(5) { width: 48px; }
.legs th:nth-child(6) { width: 43px; }
.legs th:nth-child(7) { width: 48px; }
.legs th:nth-child(8) { width: 113px; }
.legs th:nth-child(9) { width: 11px; }
.legs th:nth-child(10) { width: 82px; }
.legs th:nth-child(11) { width: 6px; padding: 0; }
.legs th:nth-child(12) { width: 49px; }

.legs th.day {
    font-size: 11px;
}

.legs .r { text-align: right; }
.legs .c { text-align: center; }
.legs td:last-child { padding-left: 8px; }

.legs i {
    color: #aaa;
}

.legs td.leg {
    padding: 0;
    color: #888;
    font-size: 10px;
}

.leg .ic {
    width: 9px;
    height: 10px;
    vertical-align: -1px;
}

.net td:not(:first-child, :last-child) {
    background: #404040;
}

.net .sum {
    box-shadow: inset 0 1px #eee;
}

.chain-btn {
    position: absolute;
    right: -6px;
    bottom: 13px;
    display: flex;
    align-items: center;
    gap: 8px;
    height: 24px;
    padding: 0 3px 0 9px;
    border: 1px solid #888;
    border-right: 0;
    border-radius: 4px 0 0 4px;
    background: linear-gradient(#555, #1a1a1a);
    font-size: 16px;
}

.chain-btn i {
    width: 9px;
    height: 15px;
    background: #3cb84c;
    clip-path: polygon(0 0, 100% 50%, 0 100%);
}

.spread-order {
    display: flex;
    flex: 1;
    align-items: center;
    gap: 5px;
    padding: 0 6px 0 7px;
}

.spread-order b {
    width: 41px;
    font-size: 11px;
}

.impact {
    margin-left: 5px;
}

.spread-order .btn {
    width: 117px;
    margin-left: auto;
}

/* Workspace tabs */
.worktabs {
    display: flex;
    gap: 5px;
    height: 28px;
    padding-left: 19px;
    border-bottom: 4px solid #a5a5a5;
    background: #00287a;
    font-size: 15px;
    line-height: 24px;
}

.worktabs a {
    height: 22px;
    margin-top: 1px;
    padding: 0 9px 0 8px;
    border: 2px solid #555;
    border-width: 0 0 2px 2px;
    border-radius: 0 0 0 4px;
    background: linear-gradient(90deg, #16181c, #001440);
}

.worktabs .on {
    background: #dcdcdc;
    color: #000;
    border-color: #dcdcdc;
    border-radius: 0;
}

.worktabs .add-tab {
    padding: 0 4px;
    border-right-width: 1px;
    border-radius: 0 0 5px 0;
    font-size: 11px;
}
```
FILE: charts.js
```
const NS = "http://www.w3.org/2000/svg";
const GREEN = "#00a800";
const RED = "#d40000";

function add(parent, tag, attrs, text) {
    const node = document.createElementNS(NS, tag);
    for (const key in attrs) node.setAttribute(key, attrs[key]);
    if (text !== undefined) node.textContent = text;
    parent.appendChild(node);
    return node;
}

function icon(name, cls) {
    return `<svg class="ic ${cls || ""}"><use href="#i-${name}"/></svg>`;
}

// Panel header buttons
const headButtons = {
    help: "?",
    wrench: icon("wrench"),
    link: icon("link", "link"),
    caret: icon("caret", "caret"),
    win: icon("win"),
    close: icon("close"),
    filter: icon("filter") + "Filter",
};
document.querySelectorAll(".icons").forEach(box => {
    box.innerHTML = box.dataset.icons.split(" ").map(name =>
        name === "gap" ? '<span class="b-gap"></span>' : `<button class="b-${name}" aria-label="${name}">${headButtons[name]}</button>`
    ).join("");
});

// Scroll bars, data-thumb is the thumb length in percent
document.querySelectorAll(".vscroll").forEach(bar => {
    bar.innerHTML = `<button class="knob up" aria-label="Up"></button><div class="track"><i class="thumb" style="height:${bar.dataset.thumb}%"></i></div><button class="knob down" aria-label="Down"></button>`;
});
document.querySelectorAll(".hscroll").forEach(bar => {
    bar.innerHTML = `<button class="knob left" aria-label="Left"></button><div class="track"><i class="thumb" style="width:${bar.dataset.thumb}%"></i></div><button class="knob right" aria-label="Right"></button>`;
});

// Chart tool bar and the price slider on its left
const tools = ["red-x", "move", "text", "bars", "trend", "zoomin", "zoomout", "cross", "expand", "contract", "spanner", "caret"];
document.querySelectorAll(".chart-tools").forEach(bar => {
    bar.innerHTML = tools.map(t => `<button class="t-${t}" aria-label="${t}">${icon(t)}</button>`).join("");
});
document.querySelectorAll(".rail").forEach(rail => {
    rail.innerHTML = '<button class="rail-end" aria-label="Up"></button><div class="rail-track"><i></i></div><button class="rail-end bottom" aria-label="Down"></button>'
        + `<div class="rail-icons">${icon("fit")}${icon("volume")}${icon("unlock")}</div>`;
});

// Each candle: colour, high, body top, body bottom, low
const weekCandles = `r593,610,615,626 r606,616,621,624 g612,612,618,629 g606,609,615,618 g606,606,612,618 g600,603,609,612
g598,600,609,612 g598,598,606,606 g597,597,603,603 g591,591,597,600 g582,585,591,591 r582,582,588,594 g561,561,588,594
r552,561,579,582 r543,546,585,594 r585,588,597,606 g590,598,603,606 r597,597,609,612 g603,606,612,612 g597,597,606,609
r597,597,603,606 r597,599,606,612 g603,603,609,612 r603,603,609,612 g597,600,606,612 g594,594,600,600 g576,594,600,600
g567,582,591,606 r582,582,592,600 r585,591,598,600 r588,597,603,603 g570,573,598,600 r570,573,579,585 g573,576,582,585
g567,573,579,582 g564,564,571,573 r558,564,573,579 y567,573,579,579 g564,570,576,579 r564,570,582,585 g516,528,552,567
r522,525,541,552 r537,540,552,558 g546,546,552,561 g537,537,546,555 r534,537,546,552 r537,545,551,552 r540,545,552,555
g534,537,549,552 r534,537,543,546 r540,540,558,564 r558,558,582,588 g567,576,582,582 g405,417,525,543 g372,381,420,423
r366,381,387,423 r384,390,417,429 r414,417,423,441 g390,405,417,420 g390,393,405,411 r390,393,402,411 g387,390,402,405
g351,351,387,393 r348,351,369,390 r366,369,378,417 r378,378,393,402`.split(/\s+/);

// Each bar: colour, x, high, low, open, close
const monthBars = `g87,504,609,558,528 r150,477,624,483,513 g210,600,741,705,633 r273,627,867,633,774 g336,672,843,837,756
g398,648,780,759,681 r458,621,807,705,735 r521,753,942,771,864 g583,633,801,795,675 r644,588,693,648,678 r707,702,885,708,876
r769,804,945,834,891 g832,759,903,864,840 r892,648,795,744,747 r955,708,762,744,756 r1018,774,900,813,834 r1080,726,843,810,813
g1140,597,753,714,657 r1203,585,720,591,687 g1265,612,711,681,663 r1326,528,675,603,651 g1389,195,582,552,288`.split(/\s+/);

// Turning points of the year, daily bars are filled in between
const yearPath = [[29, 575], [35, 588], [41, 562], [60, 560], [85, 562], [94, 545], [97, 490], [103, 472], [135, 482], [150, 500],
[165, 515], [175, 530], [190, 510], [210, 500], [235, 510], [245, 525], [258, 540], [272, 528], [278, 565], [285, 600], [292, 615],
[303, 595], [315, 625], [343, 632], [355, 620], [370, 595], [385, 580], [400, 558], [412, 560], [421, 590], [445, 610], [461, 618],
[475, 628], [493, 648], [510, 610], [525, 630], [555, 625], [565, 670], [577, 680], [585, 710], [592, 690], [597, 695], [599, 780],
[612, 770], [617, 788], [625, 750], [635, 730], [645, 705], [683, 698], [685, 632], [710, 615], [740, 612], [757, 608], [765, 595],
[780, 575], [787, 575], [790, 510], [808, 490], [815, 460], [827, 448], [838, 468], [848, 455], [856, 465], [868, 490], [875, 455],
[888, 440], [905, 460], [920, 470], [935, 495], [943, 530], [952, 505], [965, 500], [972, 530], [985, 545], [995, 510], [1010, 505],
[1020, 520], [1030, 535], [1043, 570], [1050, 545], [1065, 500], [1080, 490], [1090, 465], [1102, 420], [1110, 405], [1130, 390],
[1150, 392], [1165, 405], [1180, 415], [1195, 435], [1202, 440], [1215, 410], [1228, 370], [1236, 348], [1248, 362], [1254, 420],
[1258, 445], [1264, 420], [1268, 275], [1285, 305], [1292, 318], [1300, 285], [1315, 262], [1328, 288], [1340, 275], [1358, 260],
[1370, 295], [1380, 295], [1395, 310], [1408, 285], [1420, 325], [1435, 295], [1445, 315], [1455, 285], [1465, 280], [1472, 270]];

const colors = { g: GREEN, r: RED, y: "#ffff00" };

function split(item) {
    return [colors[item[0]], ...item.slice(1).split(",").map(Number)];
}

function drawWeek(svg, X, Y) {
    weekCandles.forEach((item, i) => {
        const [fill, high, top, bottom, low] = split(item);
        const x = Math.round(X(66 + i * 20.66));
        add(svg, "path", { d: `M${x + 0.5} ${Y(high)}V${Y(low)}`, stroke: "#fff" });
        add(svg, "rect", { x: x - 2, y: Y(top), width: 5, height: Math.max(2, Y(bottom) - Y(top)), fill });
    });
}

function drawMonth(svg, X, Y) {
    monthBars.forEach(item => {
        const [fill, cx, high, low, open, close] = split(item);
        const x = X(cx);
        add(svg, "rect", { x: x - 4, y: Y(high), width: 9, height: Y(low) - Y(high), fill });
        add(svg, "rect", { x: x - 8, y: Y(open) - 1, width: 4, height: 2, fill });
        add(svg, "rect", { x: x + 4, y: Y(close) - 1, width: 5, height: 2, fill });
    });
}

function drawYear(svg, X, Y) {
    let seed = 7;
    const rand = () => (seed = (seed * 16807) % 2147483647) / 2147483647;
    let k = 0;
    let prev = yearPath[0][1];
    for (let u = 29; u < 1472; u += 5.8) {
        while (yearPath[k + 1][0] < u) k++;
        const [x0, y0] = yearPath[k];
        const [x1, y1] = yearPath[k + 1];
        const mid = y0 + (y1 - y0) * (u - x0) / (x1 - x0);
        const wide = u > 800 || (u > 590 && u < 630);
        const half = 5 + rand() * (wide ? 19 : 9);
        const stroke = mid + rand() * 14 - 7 < prev ? GREEN : RED;
        const x = X(u);
        add(svg, "path", { d: `M${x} ${Y(mid - half)}V${Y(mid + half)}`, stroke, "stroke-width": 2 });
        add(svg, "path", { d: `M${x - 2} ${Y(mid + half / 2)}h2M${x} ${Y(mid - half / 2)}h2`, stroke });
        prev = mid;
    }
    [[98, 465, 512, GREEN], [421, 565, 620, GREEN], [461, 610, 624, "#ffff00"], [848, 420, 480, GREEN], [1270, 243, 320, GREEN], [1477, 195, 268, GREEN]].forEach(b =>
        add(svg, "path", { d: `M${X(b[0])} ${Y(b[1])}V${Y(b[2])}`, stroke: b[3], "stroke-width": 2 }));
    add(svg, "use", { href: "#i-red-x", x: 2, y: 4, width: 8, height: 10 });
    add(svg, "text", { x: 13, y: 13, "font-family": "DejaVu Sans Condensed" }, "L: 66.18 CH: +2.73 CH%: 4.30%");
}

function drawChart(id, c) {
    const svg = document.getElementById(id);
    const { width, height } = svg.getBoundingClientRect();
    const [x0, y0, x1, y1] = c.box;
    const w = width - 46;
    const h = height - 25;
    const X = u => (u - x0) * w / (x1 - x0);
    const Y = v => (v - y0) * h / (y1 - y0);
    svg.setAttribute("shape-rendering", "crispEdges");

    add(svg, "path", { d: `M.5 ${h}V.5H${w}`, stroke: "#555", fill: "none" });
    add(svg, "path", { d: `M0 ${h + 0.5}H${w + 0.5}M${w + 0.5} 0V${height - 3}`, stroke: "#888", fill: "none" });
    add(svg, "path", { d: `M0 ${Math.round(Y(c.close)) + 0.5}H${w}`, stroke: "#555", "stroke-dasharray": "6 4" });
    (c.days || []).forEach(u => add(svg, "path", { d: `M${Math.round(X(u)) + 0.5} 0V${h}`, stroke: "#555", "stroke-dasharray": "6 4" }));

    c.draw(svg, X, Y);

    c.prices.forEach(([v, label]) => {
        add(svg, "path", { d: `M${w + 1} ${Y(v)}h3`, stroke: "#888" });
        add(svg, "text", { x: w + 6, y: Y(v) + 4 }, label);
    });
    c.dates.forEach(([u, label]) => {
        add(svg, "path", { d: `M${X(u)} ${h}v3`, stroke: "#888" });
        add(svg, "text", { x: X(u), y: h + 15, "text-anchor": "middle" }, label);
    });

    const ty = Y(c.last);
    add(svg, "path", { d: `M${w + 1} ${ty}l4 -3v-4h34v13h-34v-3z`, fill: "#ffff00" });
    add(svg, "text", { x: w + 6, y: ty + 4, style: "fill:#000" }, "66.18");
    add(svg, "path", { d: `M${w + 3} ${height - 11}l4 -4v2h2v4h-2v2z`, fill: "#888" });
}

function drawStrip(id, end, labels, from, to) {
    const svg = document.getElementById(id);
    const w = svg.getBoundingClientRect().width;
    const X = u => Math.round(u * w / end);
    add(svg, "rect", { width: w, height: 11, fill: "#1c1c1c" });
    add(svg, "rect", { x: X(from), width: X(to) - X(from), height: 11, fill: "#333" });
    labels.forEach(([u, label]) => add(svg, "text", { x: X(u), y: 8, fill: "#999" }, "'" + label));
    add(svg, "rect", { x: X(from), width: 3, height: 11, fill: "#ddd" });
    add(svg, "rect", { x: X(to) - 3, width: 3, height: 11, fill: "#ddd" });
    add(svg, "path", { d: `M0 0h9v11h-9zM${w - 9} 0h9v11h-9z`, fill: "#ccc" });
    add(svg, "path", { d: `M2 5.500l4 -3v6zM${w - 2} 5.500l-4 -3v6z`, fill: "#223" });
}

drawChart("chart-week", {
    box: [55, 309, 1420, 663], close: 577, last: 393, days: [328, 602, 874, 1148], draw: drawWeek,
    prices: [[339, "67.00"], [406, "66.00"], [474, "65.00"], [541, "64.00"], [607, "63.00"]],
    dates: [[328, "May 15"], [600, "May 18"], [874, "May 19"], [1146, "May 20"]],
});
drawChart("chart-month", {
    box: [55, 135, 1420, 1006], close: 649, last: 288, draw: drawMonth,
    prices: ["67.00", "66.50", "66.00", "65.50", "65.00", "64.50", "64.00", "63.50", "63.00", "62.50", "62.00", "61.50", ""].map((p, i) => [180 + i * 66.5, p]),
    dates: [[365, "Apr 28"], [675, "May 5"], [984, "May 12"], [1295, "May 19"]],
});
drawChart("chart-year", {
    box: [27, 127, 1480, 862], close: 280, last: 214, draw: drawYear,
    prices: ["67.50", "65.00", "62.50", "60.00", "57.50", "55.00", "52.50", "50.00", "47.50", "45.00", "42.50"].map((p, i) => [180 + i * 63, p]),
    dates: [[65, "Jun '14"], [187, "Jul '14"], [314, "Aug '14"], [435, "Sep '14"], [557, "Oct '14"], [690, "Nov '14"], [798, "Dec '14"],
    [925, "Jan '15"], [1042, "Feb '15"], [1152, "Mar '15"], [1278, "Apr '15"], [1399, "May '15"]],
});

drawStrip("strip-week", 1524, [[109, "Feb 23"], [334, "Mar 9"], [553, "Mar 23"], [775, "Apr 6"], [995, "Apr 20"], [1214, "May 4"], [1437, "May"]], 1382, 1500);
drawStrip("strip-month", 1524, [[111, "Feb 23"], [334, "Mar 9"], [558, "Mar 23"], [783, "Apr 6"], [1008, "Apr 20"], [1231, "May 4"], [1453, "May"]], 1002, 1500);
drawStrip("strip-year", 1559, [[17, "May '13"], [216, "Aug '13"], [414, "Nov '13"], [608, "Feb '14"], [803, "May '14"], [1002, "Aug '14"], [1190, "Nov '14"], [1377, "Mar '15"]], 790, 1542);

// Scanner lines, one point per row
function scanLine(id, xs) {
    const g = document.getElementById(id);
    const pts = xs.map((x, i) => [x, i === 13 ? 241 : 26 + i * 17]);
    add(g, "polyline", { points: pts.join(" "), fill: "none", stroke: "currentColor" });
    pts.slice(0, 13).forEach(p => add(g, "circle", { cx: p[0], cy: p[1], r: 2, fill: "currentColor" }));
}
scanLine("scan-iv", [78, 50, 47, 54, 60, 51, 172, 80, 68, 121, 89, 75, 119, 115]);
scanLine("scan-vlm", [172, 119, 105, 62, 52, 44, 39, 35, 35, 35, 34, 28, 27, 24]);

// Open interest, bars are stacked from the bottom up: colour and top of each part
const oiBars = [[190, "x570"], [200, "b567"], [210, "y568"], [220, "b563"], [240, "x569"], [251, "x566"], [271, "b556"], [291, "b564"],
[310, "x570"], [322, "b556 p546"], [332, "x568"], [343, "b555"], [352, "y564"], [373, "b540"], [383, "x568"], [392, "b551"], [412, "x568"],
[424, "b543"], [434, "x568"], [445, "b558"], [454, "y567"], [465, "y555"], [475, "y565 r554 b532 p519"], [485, "x566"], [495, "x566"],
[506, "y550 r542 b534"], [516, "x568"], [527, "x567"], [538, "x566"], [547, "c565"], [558, "y545 r538 b522"], [568, "x566"], [578, "x567"],
[588, "x564"], [598, "x566"], [609, "y539 r532 b525"], [618, "w563"], [628, "x566"], [638, "c559"], [648, "x562"], [660, "y506 o496 r453 g445 b429"],
[670, "w562"], [680, "w566"], [690, "w566"], [700, "w560"], [711, "y504 b486"], [720, "w556 x549"], [730, "c565"], [741, "w556 c544"], [751, "w562"],
[762, "w467 c458 y338 r305 g272 b226"], [772, "x566"], [781, "c553"], [797, "x568"], [813, "y436 r364 b354"], [823, "w560"], [834, "x568"],
[864, "y450 r305 b275 p265"], [884, "x568"], [904, "y558"], [915, "y444 r254 b238"], [966, "y366 r330 b308"], [977, "y514 r508 b500"],
[987, "r560 b541"], [996, "y465 r458 b433"], [1006, "y570 r552 b544"], [1017, "y570 r556 b547"], [1027, "p562"], [1038, "x568"]];
const oiColors = { b: "#4458f8", y: "#ffff40", r: "#f80808", g: "#10b010", o: "#d06010", p: "#e82888", c: "#40c8e8", w: "#f0d8b0", x: "#777" };

function drawInterest() {
    const svg = document.getElementById("chart-oi");
    const w = svg.getBoundingClientRect().width;
    const X = u => (u - 30) * w / 1215;
    const Y = v => (v - 144) / 3;
    const dash = { stroke: "#666", "stroke-dasharray": "3 1" };
    [178, 262, 343, 424, 505, 586, 670, 751, 832, 913, 996, 1078].forEach(u =>
        add(svg, "path", { d: `M${Math.round(X(u)) + 0.5} ${Y(148)}V${Y(574)}`, ...dash }));
    ["60K", "50K", "40K", "30K", "20K", "10K", "0"].forEach((label, i) => {
        const y = Math.round(Y(175 + i * 66.5));
        add(svg, "path", { d: `M${X(130)} ${y + 0.5}H${X(1094)}`, ...dash });
        add(svg, "text", { x: X(1105), y: y + 5 }, label);
    });
    add(svg, "path", { d: `M${X(130)} 1.500V143.500H${X(1088)}V1.500Z`, fill: "none", stroke: "#777" });
    oiBars.forEach(([u, parts]) => {
        let bottom = 572;
        const x = Math.round(X(u));
        const list = parts.split(" ");
        const top = Number(list[list.length - 1].slice(1));
        add(svg, "rect", { x: x - 2, y: Y(top) - 1, width: 4, height: Y(574) - Y(top) + 1, fill: "#888" });
        list.forEach(p => {
            const v = Number(p.slice(1));
            add(svg, "rect", { x: x - 1, y: Y(v), width: 3, height: Math.max(0, Y(bottom) - Y(v)), fill: oiColors[p[0]] });
            bottom = v;
        });
    });
    add(svg, "text", { x: X(133), y: 159 }, "Strike:");
    [[341, "37"], [424, "45"], [482, "52"], [669, "60.5"], [834, "68.5"], [996, "85"]].forEach(([u, label]) =>
        add(svg, "text", { x: X(u), y: 159, "text-anchor": "middle" }, label));
    add(svg, "path", { d: `M${X(552) - 19} 147h16l3 -4l3 4h16v15h-38z`, fill: "#999" });
    add(svg, "text", { x: X(552), y: 159, "text-anchor": "middle", style: "fill:#222" }, "54.75");
    add(svg, "text", { transform: `translate(${X(112)} 72) rotate(-90)`, "text-anchor": "middle", "font-weight": "bold", "font-size": 11 }, "Puts + Calls");
}
drawInterest();
```
